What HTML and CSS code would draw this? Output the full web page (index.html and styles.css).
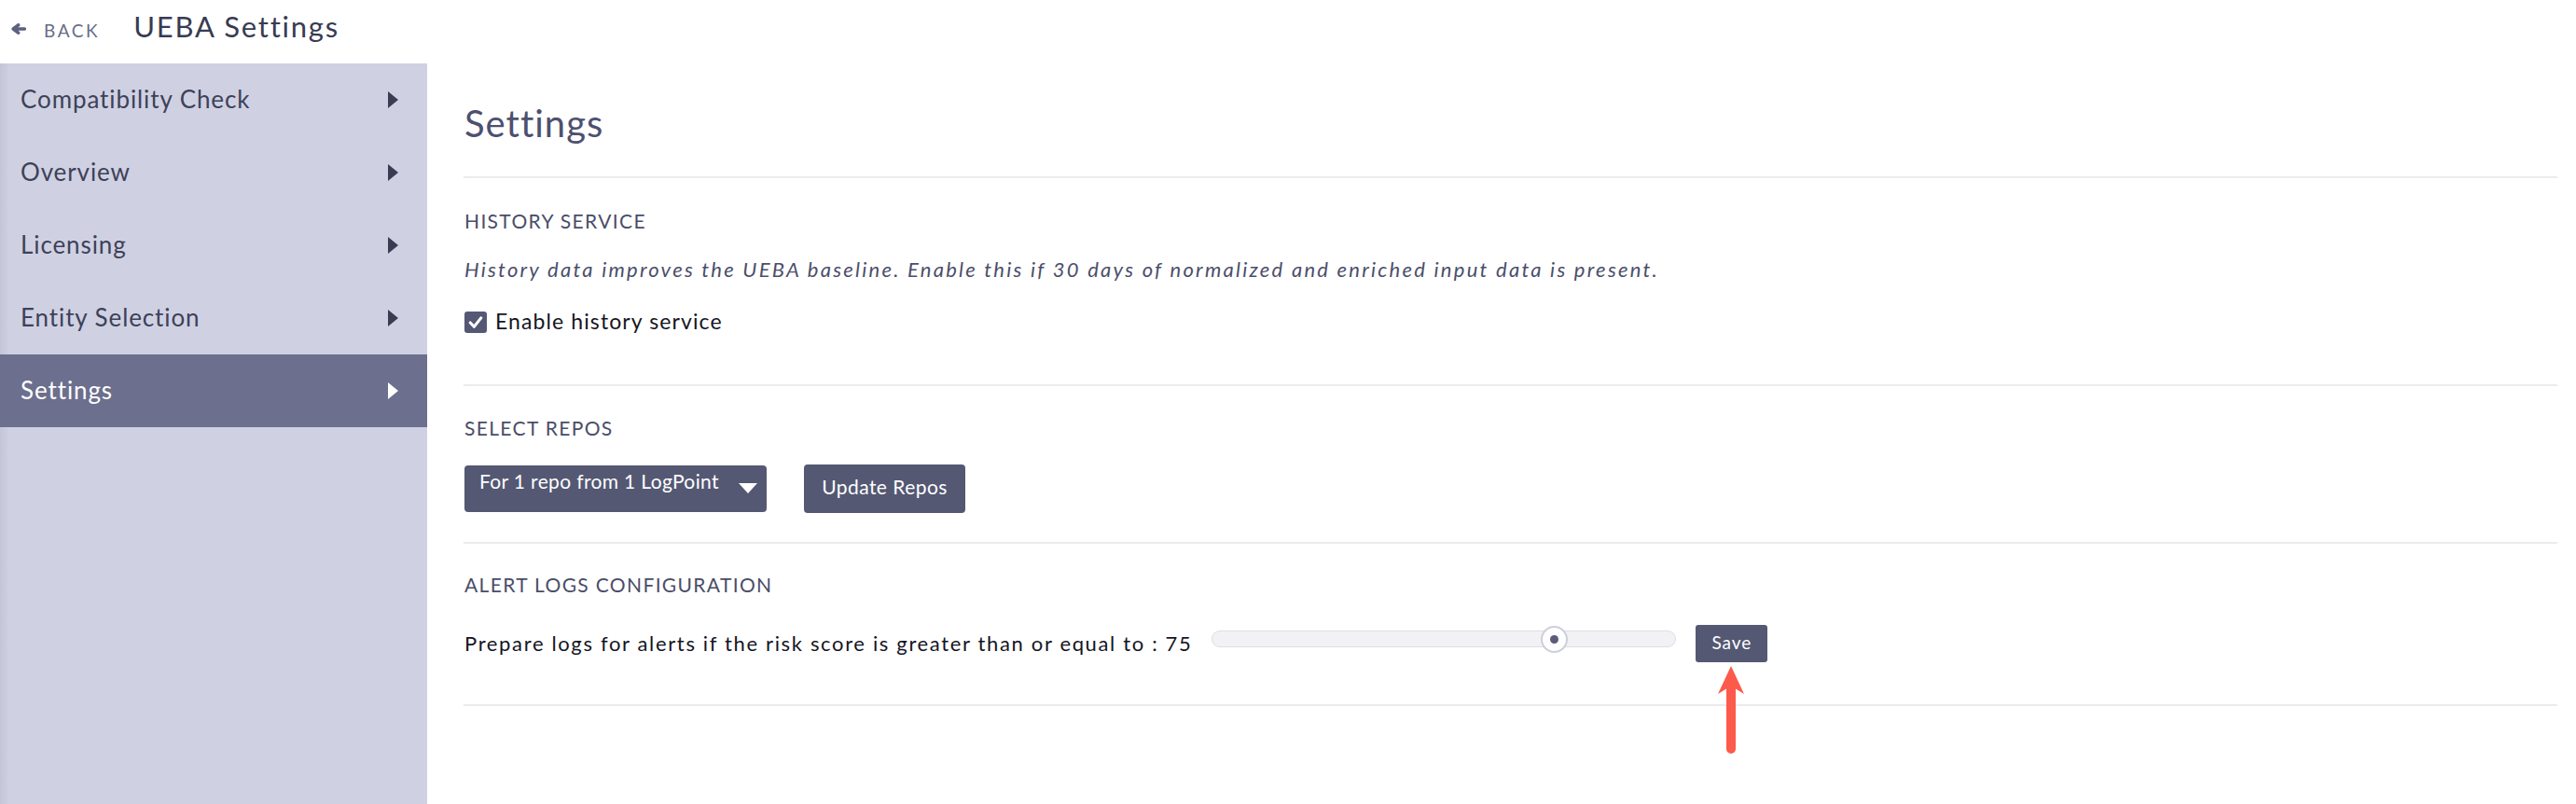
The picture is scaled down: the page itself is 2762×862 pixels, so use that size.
FILE: index.html
```html
<!DOCTYPE html>
<html lang="en">
<head>
<meta charset="utf-8">
<title>UEBA Settings</title>
<link rel="stylesheet" href="styles.css">
</head>
<body>
<header class="topbar">
  <a class="back" href="#">
    <svg class="back-icon" viewBox="0 0 16 12" width="16" height="12" aria-hidden="true">
      <path d="M14.3 6 H3.8 M7.6 1.8 L2.2 6 L7.6 10.2" fill="none" stroke="#5d6080" stroke-width="3.6" stroke-linecap="round" stroke-linejoin="round"/>
    </svg>
    <span class="back-text">BACK</span>
  </a>
  <h1 class="title">UEBA Settings</h1>
</header>
<div class="layout">
  <nav class="sidebar">
    <a class="nav-item" href="#"><span>Compatibility Check</span><i class="tri"></i></a>
    <a class="nav-item" href="#"><span>Overview</span><i class="tri"></i></a>
    <a class="nav-item" href="#"><span>Licensing</span><i class="tri"></i></a>
    <a class="nav-item" href="#"><span>Entity Selection</span><i class="tri"></i></a>
    <a class="nav-item active" href="#"><span>Settings</span><i class="tri"></i></a>
  </nav>
  <main class="content">
    <div class="page-head">
      <h2 class="page-title">Settings</h2>
    </div>
    <section class="section s-history">
      <h3 class="label">HISTORY SERVICE</h3>
      <p class="desc">History data improves the UEBA baseline. Enable this if 30 days of normalized and enriched input data is present.</p>
      <label class="check-row">
        <span class="checkbox">
          <svg viewBox="0 0 24 24" width="24" height="23" aria-hidden="true">
            <path d="M6 12.5 L10.2 17 L18 7.2" fill="none" stroke="#fff" stroke-width="3.2" stroke-linecap="round" stroke-linejoin="round"/>
          </svg>
        </span>
        <span class="check-text">Enable history service</span>
      </label>
    </section>
    <section class="section s-repos">
      <h3 class="label">SELECT REPOS</h3>
      <div class="controls">
        <div class="dropdown">
          <span class="dropdown-text">For 1 repo from 1 LogPoint</span>
          <i class="caret"></i>
        </div>
        <button class="btn btn-update">Update Repos</button>
      </div>
    </section>
    <section class="section s-alert">
      <h3 class="label">ALERT LOGS CONFIGURATION</h3>
      <div class="alert-row">
        <span class="alert-text">Prepare logs for alerts if the risk score is greater than or equal to : 75</span>
        <div class="slider">
          <span class="thumb" style="left: 73.9%"><i class="thumb-dot"></i></span>
        </div>
        <span class="save-wrap">
          <button class="btn btn-save">Save</button>
          <svg class="pointer" viewBox="0 0 28 94" width="28" height="94" aria-hidden="true">
            <path d="M14 0 L28 30 L19 24.5 L19 89 A5 5 0 0 1 9 89 L9 24.5 L0 30 Z" fill="#fc5a4b"/>
          </svg>
        </span>
      </div>
    </section>
  </main>
</div>
</body>
</html>
```
FILE: styles.css
```css
* { box-sizing: border-box; }

html, body {
  margin: 0;
  padding: 0;
  height: 862px;
  overflow: hidden;
  background: #ffffff;
  font-family: "Lato", "Noto Sans", sans-serif;
}

.topbar {
  height: 68px;
  display: flex;
  align-items: baseline;
  padding: 10px 0 0 12px;
}

.back {
  display: flex;
  align-items: baseline;
  text-decoration: none;
  color: #6a6d88;
}

.back-icon {
  align-self: center;
  position: relative;
  top: -2px;
  margin-right: 19px;
}

.back-text {
  font-size: 19px;
  letter-spacing: 2.6px;
  line-height: 36px;
}

.title {
  margin: 0 0 0 36px;
  font-size: 31px;
  font-weight: 400;
  line-height: 36px;
  color: #383b53;
  letter-spacing: 1.75px;
}

.layout {
  display: flex;
  height: 794px;
}

.sidebar {
  width: 458px;
  flex: none;
  background: linear-gradient(90deg, #c4c6d8 0px, #cfd1e3 10px, #cfd1e3 100%);
}

.nav-item {
  height: 78px;
  display: flex;
  align-items: center;
  justify-content: space-between;
  padding: 0 31px 0 22px;
  text-decoration: none;
  color: #3e4158;
  font-size: 26px;
  letter-spacing: 0.9px;
}

.nav-item span { position: relative; top: -1px; }

.tri {
  width: 0;
  height: 0;
  border-top: 9px solid transparent;
  border-bottom: 9px solid transparent;
  border-left: 11px solid #3a3c52;
}

.nav-item.active {
  background: #6c6f8d;
  color: #ffffff;
}

.nav-item.active .tri { border-left-color: #ffffff; }

.content {
  flex: 1;
  padding: 0 20px 0 39px;
}

.page-head {
  padding: 40px 0 33px 1px;
  border-bottom: 2px solid #ebebf0;
}

.page-title {
  margin: 0;
  font-size: 40px;
  font-weight: 400;
  line-height: 48px;
  color: #4d5070;
  letter-spacing: 1px;
}

.section {
  border-bottom: 2px solid #ebebf0;
  padding-left: 1px;
}

.label {
  margin: 0;
  font-size: 21px;
  font-weight: 400;
  line-height: 26px;
  color: #4a4d68;
  letter-spacing: 1.35px;
}

.s-history { padding-top: 33px; padding-bottom: 54px; }
.s-repos { padding-top: 32px; padding-bottom: 31px; }
.s-alert { padding-top: 31px; padding-bottom: 45px; }

.desc {
  margin: 26px 0 0 0;
  font-size: 22px;
  font-style: italic;
  line-height: 26px;
  color: #4b4e6a;
  letter-spacing: 2.25px;
}

.check-row {
  margin-top: 28px;
  display: flex;
  align-items: flex-start;
}

.checkbox {
  width: 24px;
  height: 23px;
  margin-top: 4px;
  border-radius: 3px;
  background: #555874;
  display: flex;
}

.check-text {
  margin-left: 9px;
  font-size: 23px;
  line-height: 28px;
  color: #15151f;
  letter-spacing: 1.1px;
}

.controls {
  margin-top: 26px;
  height: 52px;
  display: flex;
  align-items: center;
}

.dropdown {
  width: 324px;
  height: 50px;
  border-radius: 4px;
  background: #545873;
  display: flex;
  align-items: flex-start;
  justify-content: space-between;
  padding: 4px 10px 0 16px;
}

.dropdown-text {
  font-size: 21px;
  line-height: 26px;
  color: #ffffff;
  letter-spacing: 0.35px;
}

.caret {
  margin-top: 15px;
  width: 0;
  height: 0;
  border-left: 10px solid transparent;
  border-right: 10px solid transparent;
  border-top: 11px solid #ffffff;
}

.btn {
  border: 0;
  margin: 0;
  background: #545873;
  color: #ffffff;
  font-family: "Lato", "Noto Sans", sans-serif;
  cursor: pointer;
}

.btn-update {
  margin-left: 40px;
  width: 173px;
  height: 52px;
  border-radius: 4px;
  font-size: 21px;
  letter-spacing: 0.45px;
  padding: 0 0 6px 0;
}

.alert-row {
  margin-top: 30px;
  height: 40px;
  display: flex;
  align-items: center;
}

.alert-text {
  font-size: 22px;
  line-height: 40px;
  color: #15151f;
  letter-spacing: 1.65px;
}

.slider {
  position: relative;
  align-self: flex-start;
  margin: 6px 0 0 21px;
  width: 498px;
  height: 18px;
  border-radius: 9px;
  background: #f2f2f4;
  border: 1px solid #dddde5;
}

.thumb {
  position: absolute;
  top: 50%;
  width: 29px;
  height: 29px;
  margin: -14.5px 0 0 -14.5px;
  border-radius: 50%;
  background: #ffffff;
  border: 2px solid #cdcfdc;
  display: flex;
  align-items: center;
  justify-content: center;
}

.thumb-dot {
  width: 9px;
  height: 9px;
  border-radius: 50%;
  background: #5a5d7a;
}

.save-wrap {
  position: relative;
  margin-left: 21px;
  display: flex;
}

.btn-save {
  width: 77px;
  height: 40px;
  border-radius: 3px;
  font-size: 19px;
  letter-spacing: 1px;
  padding: 0 0 3px 0;
}

.pointer {
  position: absolute;
  left: 24px;
  top: 44px;
}
```
